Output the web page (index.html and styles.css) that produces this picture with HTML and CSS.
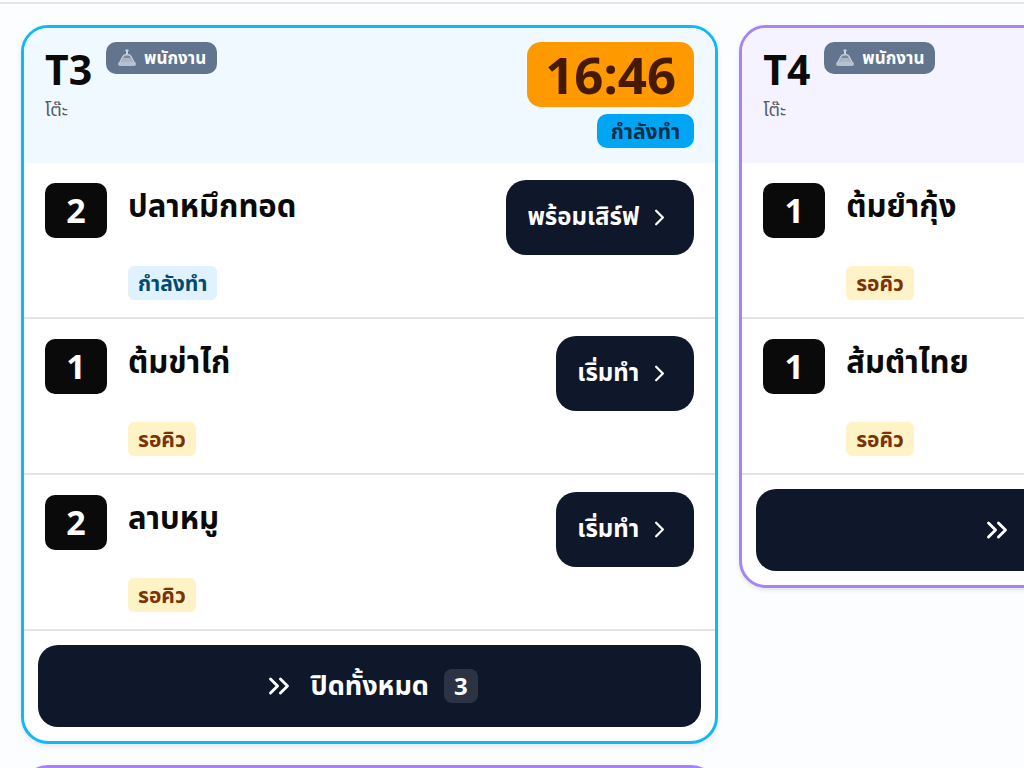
FILE: index.html
```html
<!DOCTYPE html>
<html lang="th">
<head>
    <meta charset="UTF-8">
    <meta name="viewport" content="width=device-width, initial-scale=1.0">
    <title>T3 T4</title>
    <link rel="stylesheet" href="styles.css">
</head>
<body>
    <svg class="sprite" aria-hidden="true">
        <symbol id="bell" viewBox="0 0 20 20">
            <path d="M8.500 1.500h3v1.800h-.5v3h-2v-3h-.5z" fill="#cbd5e1"/>
            <path d="M2.300 15.500 6.300 8.200Q7 6.800 8.500 6.800h3q1.500 0 2.200 1.400l4 7.300z" fill="#76869d" stroke="#c3cddb" stroke-width="1.500" stroke-linejoin="round"/>
            <path d="M5.500 11.500 6.500 10h7l1 1.500 2.500 4H3z" fill="#a9b4c4"/>
            <rect x="1" y="14" width="18" height="4" rx="2" fill="#b6c0ce"/>
        </symbol>
        <symbol id="chevron" viewBox="0 0 24 24">
            <path d="m9 18 6-6-6-6" fill="none" stroke="currentColor" stroke-width="2" stroke-linecap="round" stroke-linejoin="round"/>
        </symbol>
        <symbol id="chevrons" viewBox="0 0 24 24">
            <path d="m6 17 5-5-5-5M13 17l5-5-5-5" fill="none" stroke="currentColor" stroke-width="2" stroke-linecap="round" stroke-linejoin="round"/>
        </symbol>
    </svg>

    <main class="board">
        <div class="column">
            <article class="card card-cooking">
                <header class="card-header">
                    <div class="table-info">
                        <div class="table-title">
                            <h2>T3</h2>
                            <span class="staff"><svg><use href="#bell"/></svg>พนักงาน</span>
                        </div>
                        <p class="table-type">โต๊ะ</p>
                    </div>
                    <div class="card-status">
                        <time class="timer">16:46</time>
                        <span class="state">กำลังทำ</span>
                    </div>
                </header>
                <ul class="items">
                    <li class="item">
                        <span class="qty">2</span>
                        <div class="item-body">
                            <div class="item-top">
                                <h3>ปลาหมึกทอด</h3>
                                <button class="btn" type="button">พร้อมเสิร์ฟ<svg><use href="#chevron"/></svg></button>
                            </div>
                            <span class="tag tag-cooking">กำลังทำ</span>
                        </div>
                    </li>
                    <li class="item">
                        <span class="qty">1</span>
                        <div class="item-body">
                            <div class="item-top">
                                <h3>ต้มข่าไก่</h3>
                                <button class="btn" type="button">เริ่มทำ<svg><use href="#chevron"/></svg></button>
                            </div>
                            <span class="tag tag-queue">รอคิว</span>
                        </div>
                    </li>
                    <li class="item">
                        <span class="qty">2</span>
                        <div class="item-body">
                            <div class="item-top">
                                <h3>ลาบหมู</h3>
                                <button class="btn" type="button">เริ่มทำ<svg><use href="#chevron"/></svg></button>
                            </div>
                            <span class="tag tag-queue">รอคิว</span>
                        </div>
                    </li>
                </ul>
                <footer class="card-footer">
                    <button class="btn-all" type="button"><svg><use href="#chevrons"/></svg>ปิดทั้งหมด<span class="count">3</span></button>
                </footer>
            </article>
            <article class="card card-new">
                <header class="card-header"></header>
            </article>
        </div>

        <div class="column">
            <article class="card card-new">
                <header class="card-header">
                    <div class="table-info">
                        <div class="table-title">
                            <h2>T4</h2>
                            <span class="staff"><svg><use href="#bell"/></svg>พนักงาน</span>
                        </div>
                        <p class="table-type">โต๊ะ</p>
                    </div>
                </header>
                <ul class="items">
                    <li class="item">
                        <span class="qty">1</span>
                        <div class="item-body">
                            <div class="item-top">
                                <h3>ต้มยำกุ้ง</h3>
                            </div>
                            <span class="tag tag-queue">รอคิว</span>
                        </div>
                    </li>
                    <li class="item">
                        <span class="qty">1</span>
                        <div class="item-body">
                            <div class="item-top">
                                <h3>ส้มตำไทย</h3>
                            </div>
                            <span class="tag tag-queue">รอคิว</span>
                        </div>
                    </li>
                </ul>
                <footer class="card-footer">
                    <button class="btn-all" type="button"><svg><use href="#chevrons"/></svg>ปิดทั้งหมด<span class="count">2</span></button>
                </footer>
            </article>
        </div>
    </main>
</body>
</html>
```
FILE: styles.css
```css
* {
    box-sizing: border-box;
}

body {
    margin: 0;
    height: 100vh;
    overflow: hidden;
    background-color: #fbfdff;
    color: #0a0a0a;
    font-family: 'Noto Sans', 'Noto Sans Thai', sans-serif;
}

h2,
h3,
p,
ul {
    margin: 0;
    padding: 0;
}

.sprite {
    display: none;
}

.board {
    display: flex;
    align-items: flex-start;
    gap: 21px;
    margin-top: 2px;
    padding: 21px;
    border-top: 2px solid #e5e5e8;
}

.column {
    display: flex;
    flex: 0 0 71%;
    flex-direction: column;
    gap: 21px;
}

.card {
    overflow: hidden;
    border: 3px solid;
    border-radius: 27px;
    background-color: #fff;
    box-shadow: 0 2px 5px rgba(0, 0, 0, 0.1);
}

.card-cooking {
    border-color: #0fb8f6;
}

.card-new {
    border-color: #a684f8;
}

.card-header {
    display: flex;
    justify-content: space-between;
    min-height: 135px;
    padding: 14px 21px;
}

.card-cooking .card-header {
    background-color: #f0f9ff;
}

.card-new .card-header {
    background-color: #f5f3ff;
}

.table-title {
    display: flex;
    align-items: flex-start;
    gap: 14px;
}

.table-title h2 {
    font-size: 41px;
    line-height: 55px;
}

.staff {
    display: flex;
    align-items: center;
    gap: 7px;
    padding: 0 11px;
    border-radius: 10px;
    background-color: #62748e;
    color: #fff;
    font-size: 17px;
    font-weight: 700;
    line-height: 32px;
}

.staff svg {
    width: 20px;
    height: 20px;
}

.table-type {
    color: #525c69;
    font-size: 18px;
    line-height: 24px;
}

.card-status {
    display: flex;
    flex-direction: column;
    align-items: flex-end;
    gap: 7px;
}

.timer {
    padding: 0 18px;
    border-radius: 14px;
    background-color: #fe9a00;
    color: #461901;
    font-size: 51px;
    font-weight: 700;
    line-height: 65px;
}

.state {
    padding: 0 14px;
    border-radius: 10px;
    background-color: #00a6f4;
    color: #052f4a;
    font-size: 21px;
    font-weight: 700;
    line-height: 34px;
}

.items {
    list-style: none;
}

.item {
    display: flex;
    align-items: flex-start;
    gap: 21px;
    padding: 17px 21px;
    border-bottom: 2px solid #e2e4e6;
}

.qty {
    width: 62px;
    margin-top: 3px;
    border-radius: 10px;
    background-color: #0a0a0a;
    color: #fff;
    font-size: 34px;
    font-weight: 700;
    line-height: 55px;
    text-align: center;
}

.item-body {
    flex: 1;
}

.item-top {
    display: flex;
    align-items: flex-start;
    justify-content: space-between;
    min-height: 75px;
    margin-bottom: 11px;
}

.item-top h3 {
    font-size: 31px;
    line-height: 50px;
}

.btn,
.btn-all {
    display: flex;
    align-items: center;
    justify-content: center;
    border: none;
    background-color: #0f172a;
    color: #fff;
    font-family: inherit;
    font-weight: 700;
    cursor: pointer;
}

.btn {
    gap: 7px;
    height: 75px;
    padding: 0 21px;
    border-radius: 20px;
    font-size: 24px;
}

.btn svg {
    width: 27px;
    height: 27px;
}

.tag {
    display: inline-block;
    padding: 0 10px;
    border-radius: 6px;
    font-size: 21px;
    font-weight: 700;
    line-height: 34px;
    vertical-align: top;
}

.tag-cooking {
    background-color: #dff2fe;
    color: #024a70;
}

.tag-queue {
    background-color: #fef3c6;
    color: #7b3306;
}

.card-footer {
    padding: 14px;
}

.btn-all {
    gap: 15px;
    width: 100%;
    height: 82px;
    border-radius: 20px;
    font-size: 27px;
}

.btn-all svg {
    width: 34px;
    height: 34px;
}

.count {
    padding: 0 10px;
    border-radius: 8px;
    background-color: #2b3344;
    font-size: 24px;
    line-height: 34px;
}
```
